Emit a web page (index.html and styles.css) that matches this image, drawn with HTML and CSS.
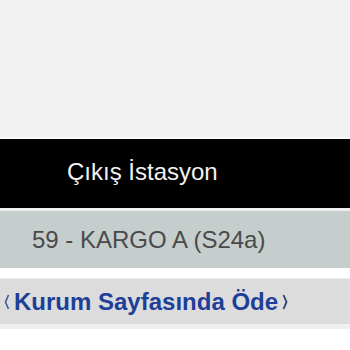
FILE: index.html
```html
<!DOCTYPE html>
<html lang="tr">
<head>
<meta charset="utf-8">
<link rel="stylesheet" href="styles.css">
</head>
<body>
<div class="page">
  <div class="top"></div>
  <div class="table">
    <div class="head"><span class="head-text">Çıkış İstasyon</span></div>
    <div class="row"><span class="row-text">59 - KARGO A (S24a)</span></div>
  </div>
  <div class="pay">
    <a class="pay-link" href="#">
      <svg class="br" width="6" height="16" viewBox="0 0 6 16"><polyline points="4.5,1 1.5,8 4.5,15" fill="none" stroke="#3b5aa8" stroke-width="1.6"/></svg>
      <span>Kurum Sayfasında Öde</span>
      <svg class="br" width="6" height="16" viewBox="0 0 6 16"><polyline points="1.5,1 4.5,8 1.5,15" fill="none" stroke="#2a3c70" stroke-width="1.8"/></svg>
    </a>
  </div>
  <div class="bottom"></div>
</div>
</body>
</html>
```
FILE: styles.css
```css
html, body {
  margin: 0;
  padding: 0;
  background: #ffffff;
}
.page {
  width: 350px;
  height: 350px;
  overflow: hidden;
  font-family: "Liberation Sans", Arial, sans-serif;
  display: flex;
  flex-direction: column;
}
.top {
  height: 137px;
  background: #f1f1f1;
  border-bottom: 2px solid #fafafa;
}
.table {
  display: flex;
  flex-direction: column;
}
.head {
  height: 69px;
  background: #000000;
  display: flex;
  align-items: center;
  padding-left: 67px;
  border-bottom: 3px solid #eef0f0;
}
.head-text {
  color: #f2f2f2;
  font-size: 24px;
  margin-top: -3px;
}
.row {
  height: 57px;
  background: #c6cdcd;
  display: flex;
  align-items: center;
  padding-left: 32px;
}
.row-text {
  color: #4a4a4a;
  font-size: 24px;
}
.pay {
  margin-top: 10px;
  height: 45px;
  background: #dcdcdc;
  display: flex;
  align-items: center;
  padding-left: 4px;
  border-top: 1px solid #ececec;
}
.pay-link {
  display: flex;
  align-items: center;
  gap: 4px;
  color: #1e3f98;
  font-size: 24px;
  font-weight: bold;
  text-decoration: none;
}
.br {
  display: block;
}
.bottom {
  height: 5px;
  background: #efefef;
}
```
